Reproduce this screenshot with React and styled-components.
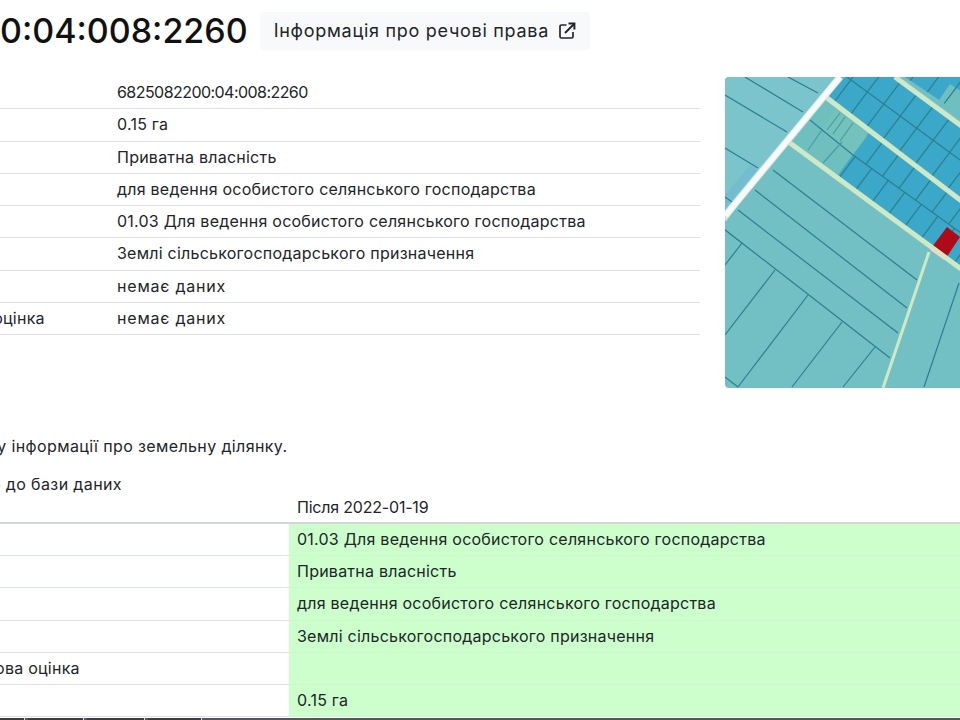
import React from "react";
import styled, { createGlobalStyle } from "styled-components";

const Global = createGlobalStyle`
  html, body { margin: 0; padding: 0; height: 720px; overflow: hidden; background: #fff; }
  body { font-family: Inter, "Noto Sans", sans-serif; color: #212529; font-size: 16px; line-height: 23.25px; letter-spacing: 0.24px; }
`;

const Page = styled.div`
  width: 1300px;
  height: 720px;
  margin-left: -193px;
  display: flex;
  flex-direction: column;
  position: relative;
`;
const Header = styled.header`
  display: flex;
  align-items: center;
  gap: 12px;
  padding-top: 12px;
  height: 38px;
  margin-bottom: 26.5px;
`;
const Title = styled.h1`
  margin: 0 0 0 1px;
  font-size: 34px;
  font-weight: 500;
  line-height: 38px;
  letter-spacing: 0;
  color: #111;
  white-space: nowrap;
`;
const RightsLink = styled.a`
  display: inline-flex;
  align-items: center;
  gap: 8px;
  height: 38px;
  padding: 0 13px 0 14px;
  background: #f8f9fa;
  border-radius: 4px;
  font-size: 18px;
  letter-spacing: 0.72px;
  color: #212529;
  white-space: nowrap;
`;
const Summary = styled.section`
  display: flex;
  gap: 25px;
  align-items: flex-start;
  height: 311.5px;
`;
const Table = styled.table`
  border-collapse: collapse;
  table-layout: fixed;
  width: ${(p) => p.$width}px;
  margin-left: ${(p) => p.$offset || 0}px;
  flex: none;
`;
const Row = styled.tr`
  height: 32.25px;
  border-bottom: 1px solid #dee2e6;
`;
const HeadRow = styled.tr`
  border-bottom: 2px solid #d3d6d9;
`;
const Cell = styled.td`
  padding: 4px 8px;
  width: ${(p) => p.$width || "auto"};
  white-space: nowrap;
  overflow: hidden;
  letter-spacing: ${(p) => p.$spacing || "inherit"};
  background: ${(p) => (p.$changed ? "#ccffcc" : "transparent")};
  ${(p) => p.$changed && "border-bottom: 1px solid #c9fac9;"}
`;
const HeadCell = styled(Cell)`
  padding: 4px 8px 2.5px;
`;
const MapFrame = styled.div`
  width: 311px;
  height: 311px;
  border-radius: 4px;
  overflow: hidden;
  flex: none;
  svg { display: block; }
`;
const Note = styled.p`
  margin: ${(p) => p.$top}px 0 0 8px;
  white-space: nowrap;
  letter-spacing: 0.38px;
  height: 19px;
`;
const TabBar = styled.nav`
  position: absolute;
  left: 193px;
  right: 0;
  bottom: 0;
  height: 2px;
  background: #55555a;
  display: flex;
`;
const Tab = styled.span`
  width: ${(p) => p.$w}px;
  margin-right: 3px;
  background: #3d3d40;
  border-right: 1px solid #ddd;
`;

const TEAL = "#72bfc4";
const BLUE = "#3ba7c9";
const LINE = "#2a808f";
const BAND = "#cfe8c6";

const along = (x0, y0, step, n, slope, len) =>
  Array.from({ length: n }, (_, i) => {
    const x = x0 + i * step;
    const y = y0 + i * step * slope;
    return [x - len * 0.6, y + len * 0.8, x + len * 0.6, y - len * 0.8];
  });

const thin = [
  [745, 77, 803, 112], [788, 77, 818, 93], [725, 95, 787, 132], [725, 148, 758, 168], [725, 197, 732, 202],
  [773, 170, 917, 280], [755, 190, 907, 308], [738, 210, 898, 333], [720, 226, 890, 358],
  [742, 243, 725, 265], [775, 270, 725, 335], [808, 295, 738, 387], [842, 322, 792, 387], [875, 347, 843, 387],
  [725, 377, 738, 387], [959, 283, 924, 387],
];

const Lines = ({ items, width = 1.2, color = LINE, clip }) => (
  <g stroke={color} strokeWidth={width} clipPath={clip}>
    {items.map((l, i) => (
      <line key={i} x1={l[0]} y1={l[1]} x2={l[2]} y2={l[3]} />
    ))}
  </g>
);

const ParcelMap = () => (
  <svg width="311" height="311" viewBox="725 77 311 311">
    <defs>
      <clipPath id="b1"><polygon points="893,77 1036,181 1036,216 847,77" /></clipPath>
      <clipPath id="b2"><polygon points="847,77 1036,216 1036,258 829,96" /></clipPath>
      <clipPath id="b3"><polygon points="868,133 1036,258 1036,287 853,155" /></clipPath>
      <clipPath id="b4"><polygon points="853,155 838,175 1036,323 1036,287" /></clipPath>
      <clipPath id="b5"><polygon points="905,77 1036,77 1036,165" /></clipPath>
    </defs>
    <rect x="725" y="77" width="311" height="311" fill={TEAL} />
    <polygon points="725,77 838,77 725,213" fill="#7bc4cb" />
    <polygon points="725,208 757,170 750,165 725,195" fill="#6fb9d2" opacity="0.6" />
    <polygon points="845,77 893,77 1036,180 1036,255 829,96" fill={BLUE} />
    <polygon points="905,77 1036,77 1036,165" fill={BLUE} />
    <polygon points="937,103 950,84 975,100 975,130" fill="#6fbfc0" />
    <polygon points="868,133 838,175 1036,323 1036,255" fill={BLUE} />
    <polygon points="827,100 868,133 838,175 792,143" fill="#6fbfbf" />
    <polygon points="853,155 868,135 835,110 822,130" fill="#76c3bb" opacity="0.7" />
    <Lines items={thin} />
    <Lines items={[[847, 77, 1036, 216], [853, 155, 1036, 287], [810, 120, 853, 155]]} />
    <Lines clip="url(#b1)" items={along(850, 81, 16.5, 12, 0.73, 30)} />
    <Lines clip="url(#b2)" items={along(838, 97, 16.5, 14, 0.73, 30)} />
    <Lines clip="url(#b3)" items={along(866, 130, 16.5, 8, 0.73, 30)} />
    <Lines clip="url(#b4)" items={along(845, 170, 16.5, 10, 0.73, 30)} />
    <Lines clip="url(#b5)" items={along(910, 81, 16.5, 6, 0.73, 30)} />
    <Lines
      color="#4a9aa3"
      items={[[840, 113, 827, 130], [845, 117, 833, 134], [853, 123, 840, 141], [822, 130, 808, 150], [842, 142, 823, 163]]}
    />
    <polygon points="947,227 960,237 946,258 932,247" fill="#ae0a18" />
    <g stroke={BAND} fill="none" strokeLinecap="butt">
      <line x1="929" y1="252" x2="883" y2="388" strokeWidth="3" />
      <line x1="827" y1="98" x2="1036" y2="258" strokeWidth="5" />
      <line x1="790" y1="143" x2="1036" y2="324" strokeWidth="5" />
      <line x1="895" y1="77" x2="1036" y2="181" strokeWidth="5" />
      <line x1="737" y1="204" x2="725" y2="220" strokeWidth="3" />
    </g>
    <line x1="931" y1="249" x2="945" y2="259" stroke="#f0d8c8" strokeWidth="2.5" />
    <line x1="840" y1="77" x2="725" y2="216" stroke="#e6eeec" strokeWidth="7" />
    <line x1="840" y1="77" x2="725" y2="216" stroke="#f8faf8" strokeWidth="4.5" />
  </svg>
);

const ExternalIcon = () => (
  <svg width="20" height="20" viewBox="0 0 20 20" fill="none" stroke="#212529" strokeWidth="1.7">
    <path d="M9.5 4H4.5A1.5 1.5 0 0 0 3 5.5v10A1.5 1.5 0 0 0 4.5 17h10a1.5 1.5 0 0 0 1.5-1.5V11" />
    <path d="M8 12 17 3" strokeWidth="2" />
    <path d="M11.5 2.6H17.4V8.5" strokeWidth="2" />
  </svg>
);

const facts = [
  ["Кадастровий номер", "6825082200:04:008:2260", "-0.55px"],
  ["Площа", "0.15 га"],
  ["Форма власності", "Приватна власність"],
  ["Цільове призначення", "для ведення особистого селянського господарства"],
  ["Код КВЦПЗ", "01.03 Для ведення особистого селянського господарства"],
  ["Категорія земель", "Землі сільськогосподарського призначення"],
  ["Вид угідь", "немає даних", "0.8px"],
  ["Нормативна грошова оцінка", "немає даних", "0.8px"],
];

const changes = [
  ["Код", "01.03 Для ведення особистого селянського господарства"],
  ["Власність", "Приватна власність"],
  ["Призначення", "для ведення особистого селянського господарства"],
  ["Категорія", "Землі сільськогосподарського призначення"],
  ["Нормативна грошова оцінка", ""],
  ["Площа", "0.15 га"],
];

export default function App() {
  return (
    <>
      <Global />
      <Page>
        <Header>
          <Title>6825082200:04:008:2260</Title>
          <RightsLink>
            Інформація про речові права <ExternalIcon />
          </RightsLink>
        </Header>
        <Summary>
          <Table $width={893}>
            <tbody>
              {facts.map(([k, v, s]) => (
                <Row key={k}>
                  <Cell $width="286px">{k}</Cell>
                  <Cell $spacing={s}>{v}</Cell>
                </Row>
              ))}
            </tbody>
          </Table>
          <MapFrame>
            <ParcelMap />
          </MapFrame>
        </Summary>
        <Note $top={47}>Історія внесення змін у інформації про земельну ділянку.</Note>
        <Note $top={19}>Останні зміни внесено до бази даних</Note>
        <Table $width={1200} $offset={35}>
          <tbody>
            <HeadRow>
              <HeadCell $width="431px" />
              <HeadCell $spacing="-0.2px">Після 2022-01-19</HeadCell>
            </HeadRow>
            {changes.map(([k, v]) => (
              <Row key={k}>
                <Cell>{k}</Cell>
                <Cell $changed>{v}</Cell>
              </Row>
            ))}
          </tbody>
        </Table>
        <TabBar>
          <Tab $w={24} />
          <Tab $w={55} />
          <Tab $w={57} />
          <Tab $w={53} />
        </TabBar>
      </Page>
    </>
  );
}
